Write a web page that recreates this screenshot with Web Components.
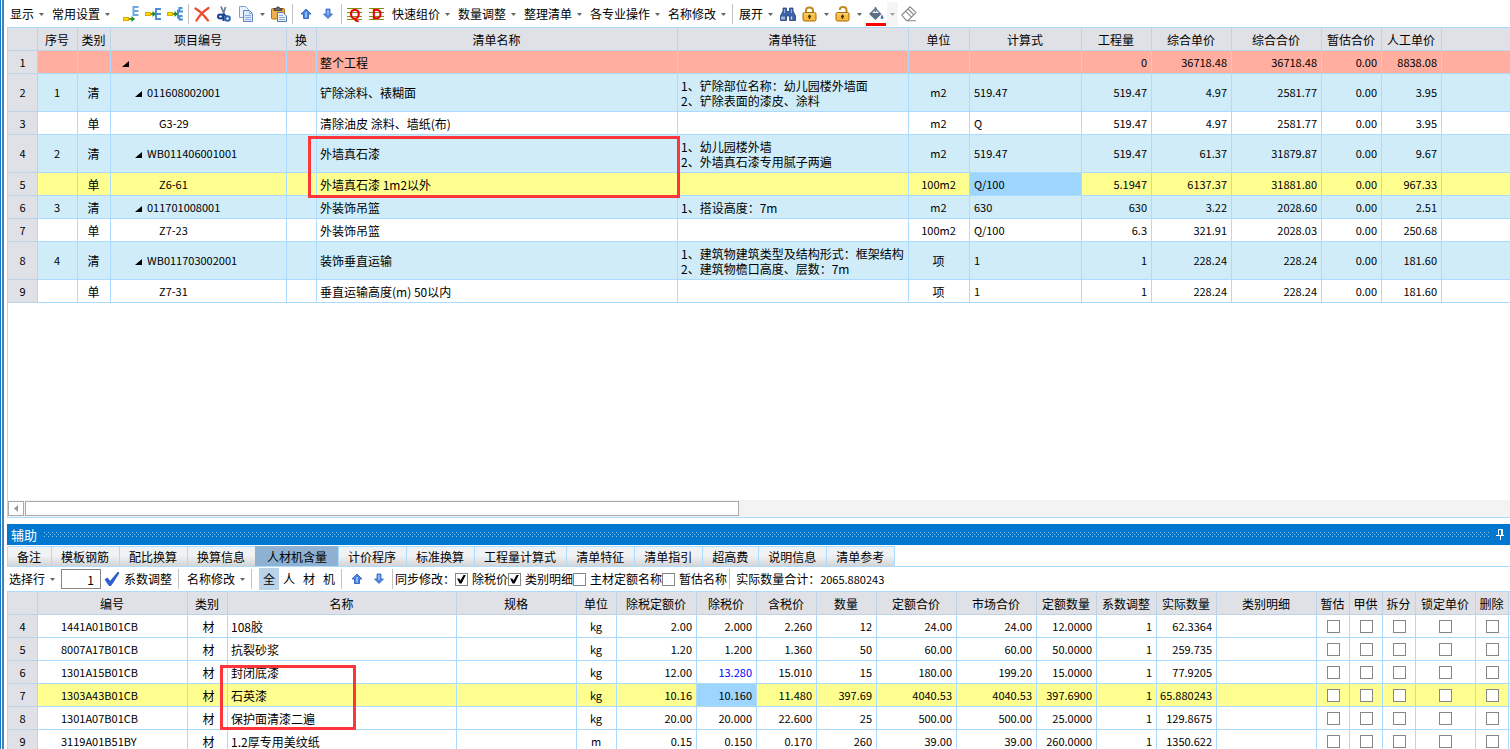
<!DOCTYPE html>
<html lang="zh-CN">
<head>
<meta charset="utf-8">
<title>工程计价</title>
<style>
html, body { margin: 0; height: 100%; background: #fff; }
body { font: 12px/16px "Noto Sans CJK SC", "Noto Sans", sans-serif; color: #000; overflow: hidden; }
</style>
</head>
<body>
<cost-app></cost-app>

<script>
const ICONS = {
  insBelow: `<path d="M15.500 1h-5v8h5M10.500 5h5" fill="none" stroke="#6fa8e0" stroke-width="2"/><rect x="0.500" y="11.500" width="5" height="3" fill="#ffd800" stroke="#d8b000"/><path d="M6 13h4" stroke="#3c6b1a" stroke-width="1.500"/><path d="M8.500 10l3.500 3-3.500 3z" fill="#168a2e"/>`,
  insMid: `<path d="M16 3h-5v10h5M11 8h5" fill="none" stroke="#4a90d9" stroke-width="2"/><rect x="0.500" y="6.500" width="5" height="3" fill="#ffd800" stroke="#d8b000"/><path d="M6 8h3" stroke="#3c6b1a" stroke-width="1.500"/><path d="M7.500 5L11 8l-3.500 3z" fill="#168a2e"/>`,
  insChild: `<path d="M15.500 2h-3v3.500h3.500M15.500 10h-3v3.500h3.500M11 3.500v9" fill="none" stroke="#4a90d9" stroke-width="2"/><rect x="0.500" y="6.500" width="5" height="3" fill="#ffd800" stroke="#d8b000"/><path d="M6 8h3" stroke="#3c6b1a" stroke-width="1.500"/><path d="M7.500 5L11 8l-3.500 3z" fill="#168a2e"/>`,
  del: `<path d="M1.500 2.500C5 4.500 10.500 10 14 14.500M14.500 2C10 5 5 10 2.500 14.500" fill="none" stroke="#ee4a30" stroke-width="2.200" stroke-linecap="round"/>`,
  cut: `<path d="M5 .5L8.500 9M9.500 1L7 9" stroke="#6a7f98" stroke-width="1.800" fill="none"/><path d="M7 8l4 3" stroke="#173f8a" stroke-width="2"/><ellipse cx="4.500" cy="10.500" rx="2.500" ry="2" fill="none" stroke="#17408c" stroke-width="2"/><ellipse cx="11.500" cy="12.500" rx="2.300" ry="2.300" fill="none" stroke="#2a60b8" stroke-width="2"/><path d="M7.500 10v5" stroke="#17408c" stroke-width="2"/>`,
  copy: `<path d="M1.500.5h6l3 3v8h-9z" fill="#edf4fd" stroke="#7f9fd0"/><path d="M5.500 4.500h6l3 3v8h-9z" fill="#dbe9fa" stroke="#5f86c4"/><path d="M11.500 4.500v3h3M7 9.500h6M7 11.500h6M7 13.500h6" fill="none" stroke="#8fb0de"/>`,
  paste: `<rect x="0.500" y="2.500" width="13" height="10.500" rx="1" fill="#eeb04a" stroke="#b0701c"/><path d="M3 4.500V2.500h2L6 1h2l1 1.500h2v2z" fill="#666" stroke="#333" stroke-width=".7"/><path d="M6.500 6.500h5.500l3.500 3.500v5.500h-9z" fill="#e8f0fa" stroke="#5879a8"/><path d="M8 9.500h4M8 11.500h6M8 13.500h6" stroke="#8aa9d2"/>`,
  up: `<path d="M8 3l5 5h-2.500v4.500h-5V8H3z" fill="#4a86e0" stroke="#2453b8" stroke-width=".8"/><path d="M7 6h2v5.500H7z" fill="#8cb9f5"/>`,
  down: `<path d="M8 12.500L3.500 8H6V3h4v5h2.500z" fill="#4a86e0" stroke="#3564c8" stroke-width=".8"/><path d="M7 4h2v5H7z" fill="#8cb9f5"/>`,
  matQ: `<path d="M0 2.500h15M0 6.500h15M0 10.500h15M0 13.500h15" stroke="#8a8a10"/><text x="8" y="13" font-size="14" font-weight="700" font-family="Liberation Sans, sans-serif" text-anchor="middle" fill="#e80000">Q</text>`,
  matD: `<path d="M0 2.500h15M0 6.500h15M0 10.500h15M0 13.500h15" stroke="#8a8a10"/><text x="8" y="13" font-size="14" font-weight="700" font-family="Liberation Sans, sans-serif" text-anchor="middle" fill="#e80000">D</text>`,
  find: `<path d="M3 2h3.500v3.500h3V2H13v3l2.500 5v4.500h-6V10h-3v4.500h-6V10L3 5z" fill="#3d62a8" stroke="#223f7c" stroke-width=".8"/><path d="M2 10.500v3M4 10.500v3M11.500 10.500v3" stroke="#c4d8f4" stroke-width="1.400"/><path d="M4.500 3v4M11.500 3v4" stroke="#8eaee0" stroke-width="1.200"/>`,
  lock: `<path d="M4 7V4.500C4 2 5.500 1.500 7.500 1.500S11 2 11 4.500V7" fill="none" stroke="#c08a20" stroke-width="2"/><rect x="1" y="6.500" width="13" height="8.500" rx="1.500" fill="#f7bc3e" stroke="#a8690c"/><path d="M2 8h11" stroke="#ffe49a"/><path d="M7.500 8.500v4.500M6 10.500h3" stroke="#4b3000" stroke-width="1.400"/>`,
  unlock: `<path d="M5 4V3c0-1.500 1-2 3-2s3.500.5 3.500 3v3" fill="none" stroke="#c08a20" stroke-width="2"/><rect x="1" y="6.500" width="13" height="8.500" rx="1.500" fill="#f7bc3e" stroke="#a8690c"/><path d="M2 8h11" stroke="#ffe49a"/><path d="M7.500 8.500v4.500M6 10.500h3" stroke="#4b3000" stroke-width="1.400"/>`,
  fill: `<path d="M7.500 1.500L13.500 8 7.500 14 1 8z" fill="#5f6f88"/><path d="M7.500 3.500L11 7H4.200z" fill="#f2f4f8"/><path d="M7.500 1v5" stroke="#5f6f88" stroke-width="1.500"/><path d="M14 8.500c2 3 2 4.500 0 4.500s-1.500-1.500 0-4.500" fill="#4f6f9c"/>`,
  erase: `<path d="M.8 9L9 .8 15 6.500 7.500 14.200H5zM4.500 5.200l6 6M7 3l6 6M3 12l3 2.800h9" fill="none" stroke="#8c8c8c" stroke-width="1.100"/>`,
  check: `<path d="M1 8.500l2.500-1.500L6 10.500 14 1l1 1L7 14.500H5z" fill="#2b62d9" stroke="#1b44b0" stroke-width=".7"/>`
};

const BUTTON_RESET = `button{appearance:none;border:0;margin:0;padding:0;background:none;font:inherit;color:inherit;white-space:nowrap}`;
const CARET = `<svg class="caret" width="5" height="3" viewBox="0 0 5 3"><path d="M0 0h5L2.500 3z" fill="#666"/></svg>`;

function define(name, render) {
  customElements.define(name, class extends HTMLElement {
    connectedCallback() {
      if (this.shadowRoot) return;
      this.attachShadow({ mode: 'open' }).innerHTML = render(this);
    }
  });
}

/* text button with a drop-down arrow */
define('tool-menu', () => `<style>
:host{display:block;flex:none}${BUTTON_RESET}
button{display:flex;align-items:center;gap:5px;height:22px;padding-right:2px}
</style><button type="button" aria-haspopup="menu"><slot></slot>${CARET}</button>`);

/* icon button */
define('tool-icon', el => `<style>
:host{display:block;flex:none;width:22px}${BUTTON_RESET}
button{display:flex;align-items:center;justify-content:center;width:100%;height:24px}
.color{width:20px;margin:0 auto;border-bottom:3px solid #f00;height:24px;padding-top:2px;box-sizing:border-box}
</style><button type="button" class="${el.hasAttribute('color') ? 'color' : ''}" aria-label="${el.getAttribute('label')}"><svg width="16" height="16" viewBox="0 0 16 16">${ICONS[el.getAttribute('icon')]}</svg></button>`);

/* stand-alone drop-down arrow */
define('tool-drop', () => `<style>
:host{display:block;flex:none;width:11px}${BUTTON_RESET}
button{display:flex;align-items:center;justify-content:center;width:100%;height:24px}
:host([dim]) button{background:#f0f0f0;opacity:.6}
</style><button type="button" aria-label="更多">${CARET}</button>`);

define('tool-sep', () => `<style>:host{display:block;flex:none;width:1px;height:20px;margin:0 2px;background:#c3c3c3}</style>`);

define('tool-group', () => `<style>:host{display:flex;flex:none;align-items:center;gap:6px;padding:0 2px 0 4px}</style><slot></slot>`);

const CHECK_CSS = `input[type=checkbox]{appearance:none;box-sizing:border-box;display:block;flex:none;width:13px;height:13px;margin:0;border:1px solid #868686;background:#fff}
input[type=checkbox]:checked::after{content:"";display:block;width:9px;height:9px;margin:1px;background:#000;clip-path:polygon(0 45%,25% 45%,38% 68%,75% 0,100% 0,50% 100%,28% 100%)}`;

define('tool-check', el => `<style>
:host{display:block;flex:none}
label{display:flex;align-items:center;gap:4px;white-space:nowrap}
${CHECK_CSS}
</style><label><input type="checkbox" ${el.hasAttribute('checked') ? 'checked' : ''}><slot></slot></label>`);

define('main-toolbar', () => `<style>
:host{display:flex;flex:none;align-items:center;height:27px;padding-top:1px;box-sizing:border-box;overflow:hidden}
.first{padding:0 8px 0 3px}
</style>
<tool-group class="first"><tool-menu>显示</tool-menu><tool-menu>常用设置</tool-menu></tool-group>
<tool-icon icon="insBelow" label="下方插入"></tool-icon><tool-icon icon="insMid" label="插入"></tool-icon><tool-icon icon="insChild" label="插入子项"></tool-icon>
<tool-sep></tool-sep>
<tool-icon icon="del" label="删除"></tool-icon><tool-icon icon="cut" label="剪切"></tool-icon><tool-icon icon="copy" label="复制"></tool-icon><tool-drop></tool-drop><tool-icon icon="paste" label="粘贴"></tool-icon>
<tool-sep></tool-sep>
<tool-icon icon="up" label="上移"></tool-icon><tool-icon icon="down" label="下移"></tool-icon>
<tool-sep></tool-sep>
<tool-icon icon="matQ" label="清单"></tool-icon><tool-icon icon="matD" label="定额"></tool-icon>
<tool-group><tool-menu>快速组价</tool-menu><tool-menu>数量调整</tool-menu><tool-menu>整理清单</tool-menu><tool-menu>各专业操作</tool-menu><tool-menu>名称修改</tool-menu></tool-group>
<tool-sep></tool-sep>
<tool-group><tool-menu>展开</tool-menu></tool-group>
<tool-icon icon="find" label="查找"></tool-icon><tool-icon icon="lock" label="锁定"></tool-icon><tool-drop></tool-drop><tool-icon icon="unlock" label="解锁"></tool-icon><tool-drop></tool-drop><tool-icon icon="fill" label="填充颜色" color></tool-icon><tool-drop dim></tool-drop><tool-icon icon="erase" label="清除颜色"></tool-icon>`);

/* ---- tables ---- */
const GRID_CSS = `
:host{display:block}
table{width:100%;table-layout:fixed;border-collapse:separate;border-spacing:0}
th,td{box-sizing:border-box;height:23px;padding:0 4px 0 3px;border:0 solid #abdcff;border-width:0 1px 1px 0;font-weight:400;line-height:15px;white-space:pre;text-align:left;overflow:hidden}
th{background:#dfe1e6;border-color:#bfd3e6;text-align:center;padding:0}
thead th{padding-right:1px}
th:last-child,td:last-child{border-right:0}
td.n,td.code,tbody th{font-size:11px}
td.n{text-align:right}
td.c{text-align:center}
td.m{font-size:11px;text-align:center}
td.f{font-size:11px}
td.k{padding:0}
td.mark{position:relative;overflow:visible}
.frame{position:absolute;z-index:1;box-sizing:border-box;border:3px solid #ff3639;pointer-events:none}
tr.tall>*{height:38px}
tr.sum td{background:#ffae9f}
tr.bill td{background:#cfecf8}
tr.cur td{background:#ffff90}
tr td.sel{background:#9dd5ff}
.blue{color:#00f}
${CHECK_CSS}
td input[type=checkbox]{margin:0 auto}`;

const cols = a => `<colgroup>${a.map(w => w ? `<col style="width:${w}px">` : '<col>').join('')}</colgroup>`;
const heads = a => `<thead><tr>${a.map(h => `<th scope="col">${h}</th>`).join('')}</tr></thead>`;
const TRI = `<svg width="7" height="6" viewBox="0 0 7 6" style="margin-right:5px"><path d="M7 0v6H0z"/></svg>`;

define('bill-grid', () => {
  const rows = [
    ['sum', '', '', 0, '', '整个工程', '', '', '', '0', '36718.48', '36718.48', '0.00', '8838.08'],
    ['bill tall', '1', '清', 1, '011608002001', '铲除涂料、裱糊面', '1、铲除部位名称\uFF1A幼儿园楼外墙面\n2、铲除表面的漆皮、涂料', 'm2', '519.47', '519.47', '4.97', '2581.77', '0.00', '3.95'],
    ['', '', '单', 2, 'G3-29', '清除油皮 涂料、墙纸(布)', '', 'm2', 'Q', '519.47', '4.97', '2581.77', '0.00', '3.95'],
    ['bill tall', '2', '清', 1, 'WB011406001001', '外墙真石漆', '1、幼儿园楼外墙\n2、外墙真石漆专用腻子两遍', 'm2', '519.47', '519.47', '61.37', '31879.87', '0.00', '9.67'],
    ['cur', '', '单', 2, 'Z6-61', '外墙真石漆 1m2以外', '', '100m2', 'Q/100', '5.1947', '6137.37', '31881.80', '0.00', '967.33'],
    ['bill', '3', '清', 1, '011701008001', '外装饰吊篮', '1、搭设高度\uFF1A7m', 'm2', '630', '630', '3.22', '2028.60', '0.00', '2.51'],
    ['', '', '单', 2, 'Z7-23', '外装饰吊篮', '', '100m2', 'Q/100', '6.3', '321.91', '2028.03', '0.00', '250.68'],
    ['bill tall', '4', '清', 1, 'WB011703002001', '装饰垂直运输', '1、建筑物建筑类型及结构形式\uFF1A框架结构\n2、建筑物檐口高度、层数\uFF1A7m', '项', '1', '1', '228.24', '228.24', '0.00', '181.60'],
    ['', '', '单', 2, 'Z7-31', '垂直运输高度(m) 50以内', '', '项', '1', '1', '228.24', '228.24', '0.00', '181.60']
  ];
  const body = rows.map((r, i) => {
    const mark = i === 3;
    return `<tr class="${r[0]}"><th scope="row">${i + 1}</th><td class="m">${r[1]}</td><td class="c">${r[2]}</td><td class="code lv${r[3]}">${r[3] < 2 ? TRI : ''}${r[4]}</td><td></td><td class="${mark ? 'mark' : ''}">${r[5]}${mark ? '<span class="frame"></span>' : ''}</td><td>${r[6]}</td><td class="${r[7] === '项' ? 'c' : 'm'}">${r[7]}</td><td class="f ${i === 4 ? 'sel' : ''}">${r[8]}</td>${r.slice(9).map(v => `<td class="n">${v}</td>`).join('')}<td></td></tr>`;
  }).join('');
  return `<style>${GRID_CSS}
.lv0{padding-left:11px}.lv1{padding-left:24px}.lv2{padding-left:48px}
.f{padding-left:4px}
.frame{left:-9px;top:1px;width:372px;height:62px}
</style><table>${cols([30, 40, 33, 176, 30, 361, 231, 61, 112, 70, 80, 90, 60, 60, 0])}${heads(['', '序号', '类别', '项目编号', '换', '清单名称', '清单特征', '单位', '计算式', '工程量', '综合单价', '综合合价', '暂估合价', '人工单价', ''])}<tbody>${body}</tbody></table>`;
});

define('material-grid', () => {
  const rows = [
    [4, '1441A01B01CB', '108胶', 'kg', '2.00', '2.000', '2.260', '12', '24.00', '24.00', '12.0000', '1', '62.3364'],
    [5, '8007A17B01CB', '抗裂砂浆', 'kg', '1.20', '1.200', '1.360', '50', '60.00', '60.00', '50.0000', '1', '259.735'],
    [6, '1301A15B01CB', '封闭底漆', 'kg', '12.00', '13.280', '15.010', '15', '180.00', '199.20', '15.0000', '1', '77.9205'],
    [7, '1303A43B01CB', '石英漆', 'kg', '10.16', '10.160', '11.480', '397.69', '4040.53', '4040.53', '397.6900', '1', '65.880243'],
    [8, '1301A07B01CB', '保护面清漆二遍', 'kg', '20.00', '20.000', '22.600', '25', '500.00', '500.00', '25.0000', '1', '129.8675'],
    [9, '3119A01B51BY', '1.2厚专用美纹纸', 'm', '0.15', '0.150', '0.170', '260', '39.00', '39.00', '260.0000', '1', '1350.622']
  ];
  const flags = ['暂估', '甲供', '拆分', '锁定单价', '删除'];
  const body = rows.map(r => {
    const cur = r[0] === 7, mark = r[0] === 6;
    return `<tr class="${cur ? 'cur' : ''}"><th scope="row">${r[0]}</th><td class="code">${r[1]}</td><td class="c kind">材</td><td class="${mark ? 'mark' : ''}">${r[2]}${mark ? '<span class="frame"></span>' : ''}</td><td></td><td class="m">${r[3]}</td>${r.slice(4).map((v, i) => `<td class="n${i === 1 && cur ? ' sel' : ''}${i === 1 && mark ? ' blue' : ''}">${v}</td>`).join('')}<td></td>${flags.map(f => `<td class="k"><input type="checkbox" aria-label="${f}"></td>`).join('')}<td class="end"></td></tr>`;
  }).join('');
  return `<style>${GRID_CSS}
:host{border:1px solid #abdcff;border-width:1px 0 0 1px}
.code{padding-left:23px}
.kind{padding:0 2px 0 4px}
td.end{padding:0;background:#fff}
.frame{left:-8px;top:4px;width:136px;height:65px}
</style><table>${cols([30, 150, 40, 229, 120, 40, 80, 60, 60, 60, 80, 80, 60, 60, 60, 100, 33, 33, 33, 60, 33, 0])}${heads(['', '编号', '类别', '名称', '规格', '单位', '除税定额价', '除税价', '含税价', '数量', '定额合价', '市场合价', '定额数量', '系数调整', '实际数量', '类别明细', ...flags, ''])}<tbody>${body}</tbody></table>`;
});

define('h-scroll', () => `<style>
:host{display:flex;flex:none;gap:1px;height:17px;padding:1px 0;box-sizing:border-box;background:#f3f3f3}
${BUTTON_RESET}
button{box-sizing:border-box;width:16px;height:15px;background:#fff;border:1px solid #a9a9a9;display:flex;align-items:center;justify-content:center}
.thumb{box-sizing:border-box;flex:0 1 714px;height:15px;background:#fff;border:1px solid #a9a9a9}
</style><button type="button" aria-label="向左滚动"><svg width="4" height="7" viewBox="0 0 4 7"><path d="M4 0v7L0 3.500z" fill="#999"/></svg></button><div class="thumb"></div>`);

/* ---- lower panel ---- */
define('panel-title', () => `<style>
:host{display:flex;flex:none;align-items:center;gap:7px;height:21px;padding:0 5px 0 4px;background:#0078d0;color:#fff;font-size:13px}
.grip{flex:1;height:5px;min-width:0}
${BUTTON_RESET}
button{display:block;width:9px;height:11px}
svg{display:block}
</style><span><slot></slot></span>
<svg class="grip" width="100%" height="5"><defs><pattern id="d" width="4" height="4" patternUnits="userSpaceOnUse"><path d="M0 0h1v1H0zM2 2h1v1H2z" fill="#8cc4ee"/></pattern></defs><rect width="100%" height="5" fill="url(#d)"/></svg>
<button type="button" aria-label="固定"><svg width="9" height="11" viewBox="0 0 9 11"><path d="M2.500 6V.5h4V6M5.500 1v5M0 6.500h8M4.500 7v4" fill="none" stroke="#fff"/></svg></button>`);

define('panel-tabs', () => `<style>
:host{display:flex;flex:none;height:22px;padding-top:1px;box-sizing:border-box;border-bottom:1px solid #abdcff}
${BUTTON_RESET}
button{box-sizing:border-box;padding:1px 10px 0 9px;border:1px solid #abdcff;border-width:1px 0 0 1px;background:linear-gradient(#f1f2f4 0 45%,#d3d4d6)}
button:last-child{border-right-width:1px}
button[aria-selected=true]{padding:1px 11px;background:#8eb0d1;border-color:#8eb0d1}
</style>${['备注', '模板钢筋', '配比换算', '换算信息', '人材机含量', '计价程序', '标准换算', '工程量计算式', '清单特征', '清单指引', '超高费', '说明信息', '清单参考'].map(t => `<button type="button" role="tab" aria-selected="${t === '人材机含量'}">${t}</button>`).join('')}`);

define('panel-toolbar', () => `<style>
:host{display:flex;flex:none;align-items:center;height:24px;padding-left:2px;overflow:hidden;white-space:nowrap}
${BUTTON_RESET}
.num{appearance:none;box-sizing:border-box;width:40px;height:20px;margin:0 0 0 4px;padding:0 6px;border:1px solid #868686;font:inherit;text-align:right;border-radius:0}
.kinds{display:flex;padding:0 0 0 5px}
.kinds button{width:20px;height:22px}
.kinds button[aria-pressed=true]{background:#bbd3e8}
.text{padding:0 4px 0 1px}
.menu{padding-left:6px}
.first{padding:0}
.move{display:flex;padding-left:2px}
.total{padding-left:4px}
.total b{font-weight:400;font-size:11px}
</style>
<tool-group class="first"><tool-menu>选择行</tool-menu></tool-group>
<input class="num" value="1" aria-label="系数">
<tool-icon icon="check" label="应用"></tool-icon><button type="button" class="text">系数调整</button>
<tool-sep></tool-sep>
<tool-group class="menu"><tool-menu>名称修改</tool-menu></tool-group>
<tool-sep></tool-sep>
<div class="kinds"><button type="button" aria-pressed="true">全</button><button type="button">人</button><button type="button">材</button><button type="button">机</button></div>
<tool-sep></tool-sep>
<div class="move"><tool-icon icon="up" label="上移"></tool-icon><tool-icon icon="down" label="下移"></tool-icon></div>
<tool-sep></tool-sep>
<span>同步修改&#65306;</span><tool-check checked>除税价</tool-check><tool-check checked>类别明细</tool-check><tool-check>主材定额名称</tool-check><tool-check>暂估名称</tool-check>
<tool-sep></tool-sep>
<span class="total">实际数量合计&#65306;<b>2065.880243</b></span>`);

define('cost-app', () => `<style>
:host{display:flex;height:100vh;overflow:hidden}
.edge{flex:none;width:4px;box-sizing:border-box;border-left:1px solid #1079c8;border-right:2px solid #4a80b5}
main{flex:1;min-width:0;display:flex;flex-direction:column;padding-left:3px}
.work{flex:1;min-height:0;display:flex;flex-direction:column;border:1px solid #abdcff;border-right:0}
.view{flex:1;min-height:0;overflow:hidden}
.aux{flex:none;height:225px;margin-top:6px;display:flex;flex-direction:column;overflow:hidden}
</style>
<div class="edge"></div>
<main>
<main-toolbar></main-toolbar>
<section class="work"><div class="view"><bill-grid></bill-grid></div><h-scroll></h-scroll></section>
<section class="aux"><panel-title>辅助</panel-title><panel-tabs role="tablist"></panel-tabs><panel-toolbar></panel-toolbar><material-grid></material-grid></section>
</main>`);
</script>
</body>
</html>
